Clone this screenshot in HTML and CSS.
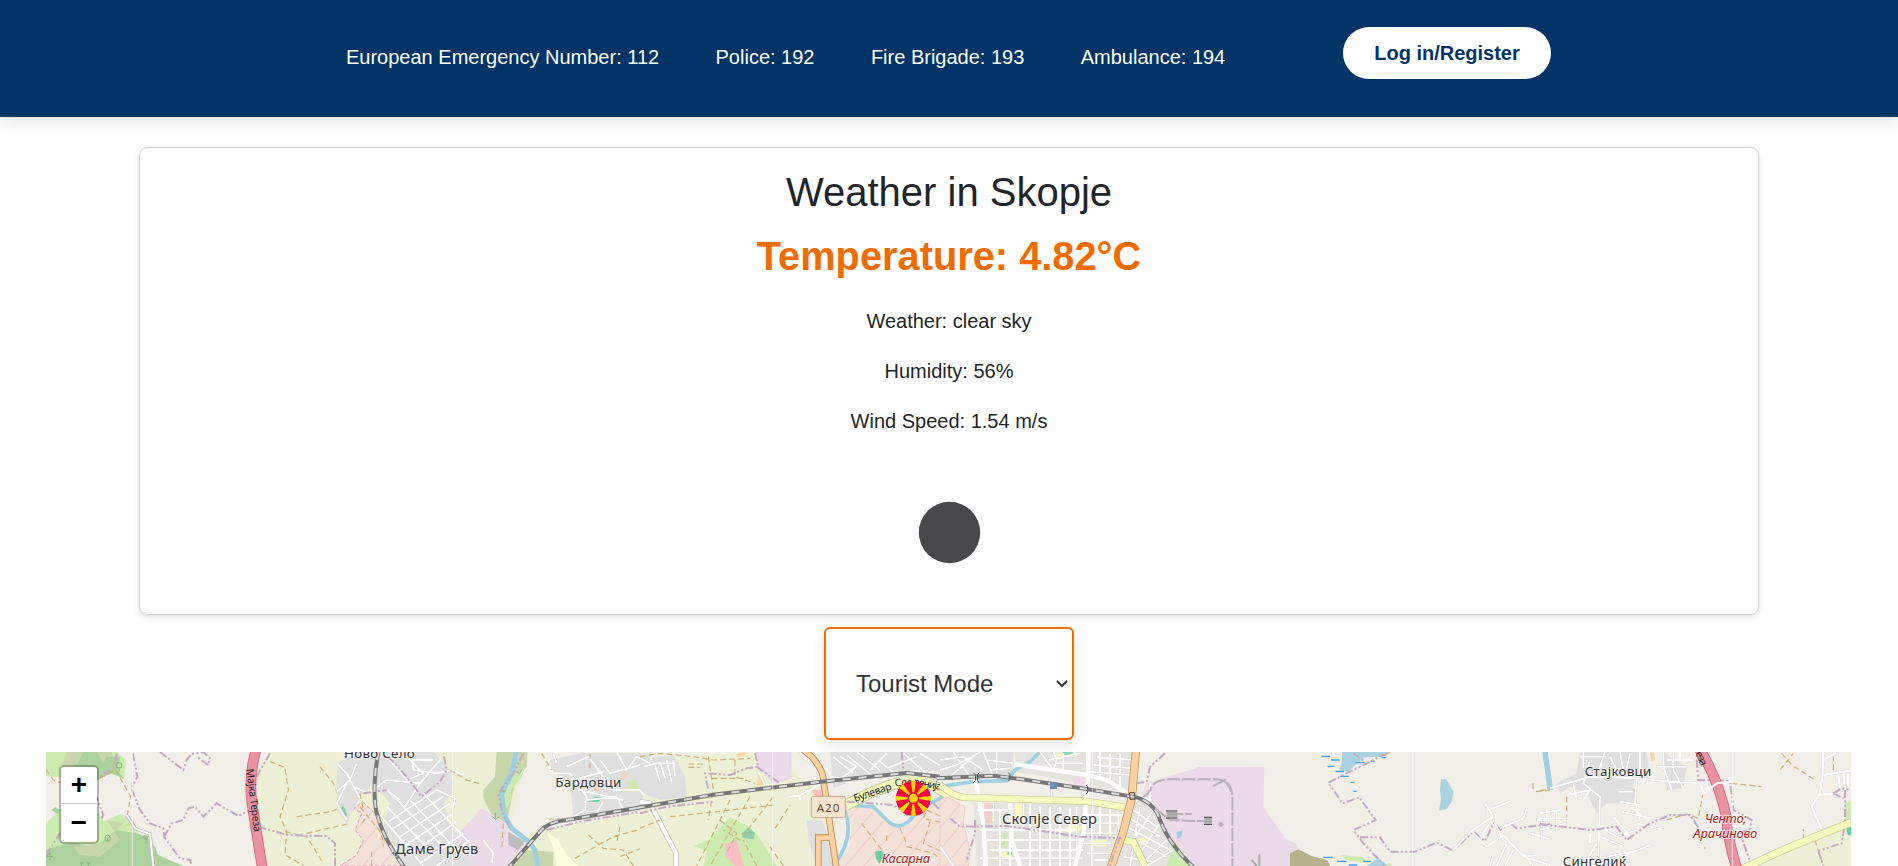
FILE: index.html
```html
<!DOCTYPE html>
<html lang="en">
<head>
<meta charset="utf-8">
<title>Skopje Guide</title>
<link rel="stylesheet" href="styles.css">
</head>
<body>
<header class="topbar">
  <ul class="numbers">
    <li>European Emergency Number: 112</li>
    <li>Police: 192</li>
    <li>Fire Brigade: 193</li>
    <li>Ambulance: 194</li>
  </ul>
  <button class="login">Log in/Register</button>
</header>
<main>
  <section class="weather">
    <h1>Weather in Skopje</h1>
    <h2>Temperature: 4.82°C</h2>
    <p>Weather: clear sky</p>
    <p>Humidity: 56%</p>
    <p>Wind Speed: 1.54 m/s</p>
    <svg class="sky" viewBox="0 0 125 125"><circle cx="62.5" cy="62.5" r="30.7"/></svg>
  </section>
  <select class="mode"><option>Tourist Mode</option></select>
  <section class="map">
    <svg class="tiles" viewBox="18 36 5415 342" preserveAspectRatio="none">
      <defs>
        <pattern id="hatch" width="42" height="42" patternUnits="userSpaceOnUse" patternTransform="rotate(40)"><rect width="42" height="42" fill="#f3e1da"/><path d="M0 0V42" stroke="#f2cbc4" stroke-width="5"/></pattern>
      </defs>
      <rect width="5500" height="400" fill="#f2efe9"/>

      <!-- western hills -->
      <g>
        <path class="meadow" d="M18 36H230L258 60 254 112 200 100 178 120H62V112L18 108ZM18 250L62 205H170L190 245 240 222 280 240 300 290 340 300V378H18Z"/>
        <path class="scrub" d="M80 36H215L225 90 180 115 150 80 65 80Z"/>
        <path class="wood" d="M130 36H170L185 60 190 70 200 50H240L232 90 254 118 215 100 170 120 62 90 110 75ZM18 330L60 315 100 310 170 318 230 270 290 280 320 290 345 320 355 345 400 365 430 378H18ZM34 210l12-8 14 8-8 12z"/>
        <path class="scrub" d="M100 320L190 310 250 250 200 240 240 300 180 350 120 345Z"/>
        <path class="field" d="M690 36H1460L1400 70 1340 130 1330 200 1370 235 1320 260 1255 285 900 378H685L655 240 650 110Z"/>
        <path class="foot" d="M18 88L40 120 65 130M180 115L225 88 250 130 272 170 262 225M690 65L735 82 745 150 720 230 740 275 735 345 790 375M735 275L800 290 850 370M770 230L870 215 900 205M840 80L880 130 900 180M800 280L930 250"/>
        <path class="bound" d="M278 40L292 110 274 145 300 210 330 250 370 265 372 290 420 355 452 360V378M360 36L430 90 440 60 455 42 490 36 510 55 505 75 470 50M372 290L395 250 430 240 445 205 465 200 490 230 530 190 595 228 640 205M650 110L690 40M655 260L740 285 860 288 885 310 885 378M230 40L225 80 180 110M165 160L190 225 182 240M18 345L60 280"/>
        <path class="case" d="M262 228L285 265 330 282 340 378"/><path class="road" d="M262 228L285 265 330 282 340 378"/>
        <path class="trunkcase" d="M648 30Q625 110 636 190Q645 250 668 390"/><path class="trunk" d="M648 30Q625 110 636 190Q645 250 668 390"/>
        <text class="street" transform="translate(619 88) rotate(83)" textLength="190">Мајка Тереза</text>
        <path class="tree" d="M203 305v-10m-8 0a8 10 0 1 1 16 0a8 9 0 1 1-16 0M318 312v-14l-8-10h16l-8 12M30 360v-25l-9 15h18M125 378v-9m-6 0h14M145 378v-9m-6 0h14M237 95v-12m-7 0h14v-14h-14z"/>
        <path d="M277 36V378" stroke="#fff" stroke-width="2"/>
      </g>

      <!-- Novo Selo, Dame Gruev, Bardovci -->
      <g transform="translate(900 0)">
        <path class="field" d="M310 36H560L540 130 520 230 400 240 340 310 300 250 250 190 330 130 290 60Z"/>
        <path class="field" d="M590 270L760 245 930 205V378H480L560 300Z"/>
        <path class="urban" d="M-10 70L60 36H280L330 90 340 150 310 190 340 270 410 330 400 378H200L130 260 150 190 100 130 60 170 20 250-10 210Z"/>
        <path class="urban" d="M630 60L720 40H930V200L740 240 700 230 690 120 640 100Z"/>
        <path fill="url(#hatch)" stroke="#d8a0b4" stroke-width="3" stroke-dasharray="12 6" d="M68 185L110 225 130 290 165 330 190 378H0L50 345 70 300 45 270 65 220 42 205Z"/>
        <path class="scrub" d="M470 36H562L560 80 525 130 500 250 460 235 430 175 430 150 465 110Z"/>
        <path class="meadow" d="M555 80L510 120 490 165 500 205 515 180 512 150 545 115Z"/>
        <path class="indus" d="M425 205L500 250 510 290 560 310 500 378H400L345 290Z"/>
        <path d="M505 275L555 305 535 330 505 315Z" fill="#bdbdbd"/>
        <path class="scrub" d="M500 378L560 330 640 335 640 378Z"/>
        <path d="M620 275L655 300 680 345 715 378H650L640 320Z" fill="#ffffe0"/>
        <path d="M740 185L765 170 790 172 775 185Z" fill="#66cda0"/>
        <path class="meadow" d="M860 125l30-8 10 30-30 3z"/><path fill="#f8d4b0" d="M840 100l15-5 8 15-15 10zM760 138l18 2 2 14-20-2zM850 140l14 4-4 12-14-2z"/>
        <path d="M0 205l10-8 12 28-6 8z" fill="#8bc99b"/>
        <path class="water" d="M530 30L515 100 485 160 490 220 515 265 560 300 585 330 592 378"/>
        <path class="minor" d="M-10 70L20 100 40 140 85 160 140 120 240 130 300 60M-10 155L30 120 50 70M150 60L200 120 250 100 200 50M215 36L220 90 290 100 340 90 375 108M240 130L195 200 140 150M220 60L280 60M40 140L60 175M20 240L-10 190 20 130M605 40L640 100 690 100 740 170 735 210 700 230M680 80L745 50 820 150 900 150 930 190M700 120L790 95M720 150L850 180M780 60L810 100 900 75M830 36L860 90 890 50 930 70M740 180L830 170 850 210M770 220L790 185M650 70L640 40"/>
        <path class="minor" d="M145 245L290 150 345 175 340 200M160 265L310 170M180 290L330 190M190 320L340 220M210 345L350 245M240 370L370 280M290 378L390 300M140 200L270 330M180 190L310 320M210 180L350 330M250 160L380 300M120 225L250 378M430 300L460 340 455 370M140 150L180 180"/>
        <path class="foot" d="M60 200L125 280 130 320M95 378V335M60 160L70 210M65 250L80 230M330 90L380 120 430 135M490 250L485 330M605 40L635 90M705 355L820 290 930 260M745 285L790 325 850 330 880 378M930 315L840 350M840 260L830 310M750 85V36M625 237H690"/>
        <path class="bound" d="M145 50L200 110 245 170 300 125 320 90 310 40M550 40L520 100 475 160 485 210 510 265M620 270L720 245 930 210M70 160L140 150"/>
        <path class="rail" d="M115 36Q95 150 110 220Q135 310 200 390M500 390L600 275Q625 245 680 240L930 197"/>
        <path class="raildash" d="M115 36Q95 150 110 220Q135 310 200 390M500 390L600 275Q625 245 680 240L930 197"/>
        <path class="reed" d="M530 95l8 6 8-12M458 230l8 8 12-8M466 218v18M482 150l8 4 8-2"/>
        <path d="M338 36V378" stroke="#fff" stroke-width="2"/>
        <text class="place" x="12" y="53" textLength="212">Ново Село</text>
        <text class="place large" x="165" y="341" textLength="250">Даме Груев</text>
        <text class="place" x="646" y="142" textLength="198">Бардовци</text>
      </g>

      <!-- Skopje north-west -->
      <g transform="translate(1800 0)">
        <path class="field" d="M20 130L100 50 310 40 400 36 480 110 540 130 560 210 550 378H0V210Z"/>
        <path class="urban" d="M0 130L40 50 100 45 135 110 140 170 60 180 20 165ZM500 240L545 240 600 378H530L505 300ZM570 36H960V100L820 90 640 120 580 145Z"/>
        <path class="indus" d="M345 36H455V115L400 135 360 85Z"/>
        <path class="meadow" d="M270 232L330 260 370 310 410 378H190L200 335 162 318 205 300Z"/>
        <path d="M258 312L290 300 300 335 312 378H285L255 345ZM515 150l45 0 10 30-35 5z" fill="#f9bfc4"/>
        <path d="M305 280l20-17 20 15-5 20-30-4z" fill="#8bd0a8"/><path fill="#fcd9a4" d="M290 40l25-4v10l-22 4zM355 95l20 40-25 5z"/>
        <path d="M610 195H700L740 240 780 265 840 210 930 150V378H580L625 330 635 260Z" fill="url(#hatch)"/>
        <path d="M615 190L750 190 815 240 775 262 730 235 700 205Z" fill="#f2efe9"/>
        <path class="water thin" d="M610 200Q650 290 580 378M615 195L700 200 740 240Q775 275 810 240L840 205 930 160"/>
        <path fill="none" stroke="#c9c795" stroke-width="34" d="M618 195L700 155 800 118 860 125 930 165"/><path fill="none" stroke="#f6fabe" stroke-width="29" d="M618 195L700 155 800 118 860 125 930 165"/>
        <path class="minor" d="M45 75L60 125M60 65L75 115M80 60L95 125M100 60L105 110M10 80L50 70 105 70M585 130L650 80 600 50M640 100L580 50M620 45L700 110M650 36L720 90M690 90L740 40M720 65L790 120M740 85L830 50M790 40L870 110M840 40L930 95M570 110L640 120M470 170L560 125M355 95L375 135M450 170L480 165 480 180M480 36L500 60"/>
        <path class="case heavy" d="M0 185L30 190 108 340V378"/><path class="road heavy" d="M0 185L30 190 108 340V378"/>
        <path class="foot" d="M0 50L60 40 160 50 220 60 330 55M205 50L220 150 205 240M285 60V110L345 130M215 115L310 115M145 72h45M145 82h35M90 230L230 215 400 195M270 180L170 378M330 170L210 378M400 170L300 300 250 270M240 240L290 280 260 340M0 265L60 240M405 265L450 195M430 378L390 320M350 378L310 300M665 250L725 330M800 320L880 340 930 378M780 265L800 310M740 285v20M860 210L915 235 905 248 850 235ZM870 245L850 310 930 345"/>
        <path class="bound" d="M345 40L355 80 320 85 270 105 195 100 205 150M350 80L420 130M0 220L80 200 220 185M785 36L790 90M620 185L760 195 810 230M880 190L930 240"/>
        <path class="primarycase" d="M490 30L515 50Q550 90 550 120L590 390M580 293H535V390"/><path class="primary" d="M490 30L515 50Q550 90 550 120L590 390M580 293H535V390"/>
        <path class="rail" d="M-10 204L220 164 545 125 800 99 940 115"/><path class="raildash" d="M-10 204L220 164 545 125 800 99 940 115"/>
        <path d="M398 36V378" stroke="#fff" stroke-width="2"/>
        <rect x="514" y="169" width="102" height="64" rx="6" fill="#f9e4d0" stroke="#c3a58c" stroke-width="3"/>
        <text class="shield" x="530" y="215" textLength="68">A20</text>
        <text class="street" transform="translate(645 186) rotate(-19)" textLength="118">Булевар</text>
        <text class="street" transform="translate(764 139) rotate(-2)" textLength="55">Сло</text>
        <text class="street" transform="translate(820 135) rotate(10)" textLength="85">венија</text>
        <path d="M705 335l20-4 8 15-15 25-10-15z" fill="#68cba1"/>
        <text class="special" x="725" y="368" textLength="145">Касарна</text>
      </g>

      <!-- Skopje Sever -->
      <g transform="translate(2700 0)">
        <path class="urban" d="M0 36H220L215 105 0 115Z"/>
        <path fill="#e5e3df" d="M225 36H590L570 160 400 125 230 95ZM100 190H550L500 378H110ZM560 180L620 185 700 320 680 378H530Z"/>
        <path fill="url(#hatch)" stroke="#ecc6be" stroke-width="2" d="M0 180L20 170 75 200 70 250 90 330 85 378H0Z"/>
        <path class="indus" d="M620 130L780 80H930V378H760L680 280 640 190 605 165ZM400 110h40v30h-40z"/>
        <path class="meadow" d="M700 300L760 378H680ZM188 280h15v40h-20z"/>
        <path d="M225 190h25v45h-25zM375 262l30-8 20 8-10 14h-38zM455 300h45v18h-45zM590 298l25-8 5 15-20 12zM180 335h35v18h-35zM350 38h60v12h-60z" fill="#fafabe"/>
        <path d="M368 36h30v12h-26zM202 335h14v10h-14z" fill="#83d8ad"/><path fill="#f3cfc7" d="M132 190h28v60h-28z"/>
        <path class="water thin" d="M0 140L100 125 200 122 225 90 270 65 300 36"/>
        <path class="minor" d="M0 60L70 50 130 90M40 36L90 110M0 90L50 75 120 36M30 110L100 50M130 36L160 110M140 60L220 70M150 90L210 85M170 36V100M300 36L340 90 350 60 340 36M350 70H430M325 60L420 40M370 90V40M470 50L580 60M460 75L575 85M450 95L570 105M480 36V115M510 40V130M540 40V140"/>
        <path class="minor" d="M110 210H210V378M130 190V378M160 190V245M180 205V378M250 190V260M270 190V378M300 200V378M330 200V378M360 200V378M390 205V378M410 200V378M120 270H410M140 300H430M150 330H430M120 355H430M260 170V190M335 150V180M430 225H550M455 210V378M480 200V290M510 205V290M535 215V290M440 250H540M430 280H530M430 310H515M440 340H510M460 360H505M560 230L660 290M580 210L650 260M560 260L690 330M570 290L680 350M600 200L570 378M640 210L580 300M660 250L600 340M600 378L680 300M620 378L700 330M550 350L640 365M0 320L40 378M630 130V185"/>
        <path class="road avenue" d="M445 36V110L430 280 405 378M222 72L440 105 500 120 570 165 630 185M105 110L130 250 138 378M210 190L215 300 240 378"/>
        <path d="M0 135Q40 168 70 172L250 178 440 184 555 202M550 300L580 305 615 378" fill="none" stroke="#c9c795" stroke-width="22"/><path d="M0 135Q40 168 70 172L250 178 440 184 555 202M550 300L580 305 615 378" fill="none" stroke="#f6fabe" stroke-width="18"/>
        <path class="primarycase wide" d="M588 30L575 175 550 275 510 390"/><path class="primary wide" d="M588 30L575 175 550 275 510 390"/>
        <path class="bound" d="M30 235L60 260 200 258 320 275 420 290 545 295M105 240V280L80 360M675 40L630 80 620 125 590 130M540 290L510 378"/>
        <path class="rail" d="M-10 115L160 107 240 117 440 147 590 172Q645 190 660 240Q690 320 770 390"/><path class="raildash" d="M-10 115L160 107 240 117 440 147 590 172Q645 190 660 240Q690 320 770 390"/>
        <path class="siding" d="M610 170Q630 160 635 140 650 118 690 118H830Q877 120 877 170V378M820 138L855 120 877 160M645 205L690 240 800 244M690 222H755"/>
        <path fill="#aaa" stroke="#333" stroke-width="3" d="M678 213h34M678 234h34M792 232h24M792 253h24"/><path d="M680 215h32v17h-32zM793 235h23v16h-23z" fill="#aaa"/><circle cx="843" cy="253" r="7" fill="#b5adb5"/>
        <path d="M710 275l18-4-4 20-12 6z" fill="#9fd0df"/>
        <rect x="330" y="127" width="21" height="20" fill="#7389b8"/>
        <path d="M458 36V378" stroke="#fff" stroke-width="2"/>
        <path fill="none" stroke="#555" stroke-width="3" d="M100 98l6 6v18l-6 6M118 98l-6 6v18l6 6M205 98l5 6v14l-5 6M438 135l5 6v16l-5 6M568 158h15l2 20h-15z"/>
        <text class="place large" x="186" y="251" textLength="285">Скопје Север</text>
      </g>

      <!-- eastern wetlands -->
      <g transform="translate(3600 0)">
        <path class="indus" d="M0 81H73L70 200 138 297 167 310 175 335 155 378H0Z"/>
        <path d="M150 340L175 328 215 348 262 360 270 378H150Z" fill="#b5b28e"/>
        <path class="lake" d="M307 36H445L430 50 375 52 340 80 325 97 297 90 305 70ZM603 118L618 118 641 155 635 185 620 207 597 212 603 180 600 150ZM380 378L415 355 445 378Z"/>
        <path class="meadow" d="M302 345L370 352 380 367 320 362ZM440 370l15 0v8h-15z"/>
        <path class="water" d="M915 36L925 100 932 150"/>
        <path d="M244 49h26M273 60h26M263 79h20M287 94h25M300 109h26M347 68h28M332 127h12M340 154h10M392 63h12M425 53h12M250 352h28M291 364h28M326 375h26M369 364h25" fill="none" stroke="#4b9eed" stroke-width="4"/>
        <path class="bound" d="M440 40L320 100 265 128 308 190 358 172 407 240 341 270 370 310 435 378M360 292H420L450 335H525L590 308 640 332 700 275 735 303 762 248 780 270 810 250 830 265 930 252M340 40L375 65"/>
        <path class="minor" d="M640 330L695 272 760 230 735 190M740 213L815 182M695 275L740 320 790 285 850 350 930 375M760 240L790 300M780 265L850 235 860 205M720 290L750 250M800 310L770 378M820 330L795 378M865 278L930 298M905 235V300M890 240H930M850 350L890 345M880 378L850 340M760 345L750 378"/>
        <path class="foot" d="M879 130V150M888 155L930 150M450 36L430 50"/>
        <path d="M58 343V378M35 360L50 378" stroke="#aaa" stroke-width="6"/>
        <path d="M517 36V378" stroke="#fff" stroke-width="2"/>
      </g>

      <!-- Stajkovci, Singelic -->
      <g transform="translate(4500 0)">
        <path class="urban" d="M120 36H320L330 110 280 130 290 190 200 190 170 220 140 160 90 140 60 160 50 130 110 100ZM370 36L440 80 430 145 380 150Z"/>
        <path class="field" d="M620 378L830 300 933 255V378Z"/><path d="M918 262l15-4v28h-10z" fill="#5fd3a0"/><path class="meadow" d="M915 185h18v55h-18z"/>
        <path class="water" d="M15 36L30 150"/>
        <path class="minor" d="M30 145L150 110 290 115 390 125 480 130M120 50H200M130 36V85M150 60L130 130 180 170 175 350M80 165L150 150 130 180M100 130L110 180M170 110L195 36M210 50L230 90M240 36L250 90M270 40L260 85M300 36V90M290 115L285 190 300 240 290 210M235 155H280M240 185L300 195M245 215L330 235M270 200L350 260M0 235H80M0 220L60 210M20 210V260M50 210V270M0 270L80 250M370 36V80L395 150M400 36V90L430 145M380 60H460M350 80H440M420 36V60M250 350L330 315M200 350L300 330M130 378L170 310M150 280V310M180 260L230 290 290 270M180 290L250 320M220 230L270 290M310 230L380 240M290 250L370 270"/>
        <path class="minor lane" d="M850 36L848 100 840 160 815 200 845 268M848 105L933 92M835 165L880 160M895 105L900 145M910 100L915 150M925 100V140M850 60L890 38"/>
        <path class="foot" d="M80 170V230M0 152L30 148M380 240L440 222 475 235 488 165M575 130L665 140M720 90L760 40M725 40L755 75 830 123M880 90V50M790 300V268M825 300L850 378M495 320v8"/>
        <path class="bound" d="M0 252L80 262 150 270 230 260 260 300 330 250 390 225 450 225 480 270M470 60L475 120 570 123 580 210 635 240 630 265 600 280 635 378M915 150V250L905 310 835 333M835 333L850 378M880 160L905 145 933 150M880 160L910 175"/>
        <path d="M600 390L740 325 933 247" fill="none" stroke="#c9c795" stroke-width="24"/><path d="M600 390L740 325 933 247" fill="none" stroke="#f6fabe" stroke-width="20"/>
        <path class="trunkcase" d="M475 22Q535 115 560 235Q565 310 592 390"/><path class="trunk" d="M475 22Q535 115 560 235Q565 310 592 390"/>
        <path d="M480 130L490 160 530 130 575 125" class="road"/>
        <text class="street" transform="translate(466 40) rotate(66)" textLength="43">еза</text>
        <path d="M577 36V378M185 68v15" stroke="#fff" stroke-width="2"/><path d="M330 38l12-2 4 24-12 5z" fill="#fbd5ac"/>
        <text class="place" x="134" y="107" textLength="200">Стајковци</text>
        <text class="place" x="68" y="379" textLength="190">Сингелиќ</text>
        <text class="special" x="494" y="248" textLength="126">Ченто;</text>
        <text class="special" x="460" y="293" textLength="192">Арачиново</text>
      </g>

      <!-- sun marker -->
      <g transform="translate(2620 175)">
        <clipPath id="disc"><circle r="53"/></clipPath>
        <g clip-path="url(#disc)"><circle r="53" fill="#f7063d"/>
        <path fill="#ffd500" d="M0 0L-8-54H8ZM0 0L-8 54H8ZM0 0L-54-8V8ZM0 0L54-8V8ZM0 0L-43-31-31-43ZM0 0L43-31 31-43ZM0 0L-43 31-31 43ZM0 0L43 31 31 43Z"/>
        <circle r="15.5" fill="#ffd500" stroke="#f7063d" stroke-width="4"/></g>
      </g>
    </svg>
    <div class="zoom"><button>+</button><button>−</button></div>
  </section>
</main>
</body>
</html>
```
FILE: styles.css
```css
* { box-sizing: border-box; }
body {
  margin: 0;
  height: 866px;
  overflow: hidden;
  background: #fefefe;
  color: #212529;
  font: 20px/30px "Liberation Sans", Arial, sans-serif;
}
.topbar {
  height: 117px;
  display: flex;
  align-items: flex-start;
  padding: 27px 0 0 346px;
  background: #036;
  box-shadow: 0 4px 15px rgba(0, 0, 0, .1);
}
.numbers {
  display: flex;
  gap: 56.4px;
  width: 997px;
  margin: 0;
  padding: 15px 0 0;
  list-style: none;
  color: #fff;
}
.numbers li { white-space: nowrap; }
.login {
  width: 208px;
  height: 52px;
  padding: 0;
  border: 0;
  border-radius: 26px;
  background: #fff;
  color: #036;
  font: bold 20px "Liberation Sans", Arial, sans-serif;
}
main {
  display: flex;
  flex-direction: column;
  align-items: center;
}
.weather {
  width: 1620px;
  height: 468px;
  margin-top: 30px;
  padding: 20px;
  border: 1px solid #ced0d2;
  border-radius: 8px;
  box-shadow: 0 2px 6px rgba(0, 0, 0, .1);
  text-align: center;
}
.weather h1, .weather h2 {
  margin: 0;
  font-size: 40px;
  line-height: 48px;
}
.weather h1 { font-weight: 400; }
.weather h2 { margin: 16px 0 26px; color: #ef6c00; font-size: 39.8px; }
.weather p { margin: 0 0 20px; }
.sky { display: block; width: 125px; height: 125px; margin: 34px auto 0; }
.sky circle { fill: #48484a; }
.mode {
  zoom: 1.25;
  width: 200px;
  height: 90.4px;
  margin: 9.6px 0;
  padding: 0 0 0 20px;
  border: 1.6px solid #ef6c00;
  border-radius: 4.8px;
  background: #fff;
  color: #333;
  font: 19.2px "Liberation Sans", Arial, sans-serif;
  box-shadow: 0 4px 10px rgba(0, 0, 0, .1);
}
.map {
  position: relative;
  align-self: flex-start;
  width: 1805px;
  height: 114px;
  margin-left: 46px;
}
.tiles { display: block; width: 1805px; height: 114px; }
.zoom {
  position: absolute;
  left: 13px;
  top: 13px;
  width: 40px;
  border: 2px solid rgba(0, 0, 0, .25);
  border-radius: 5px;
  background-clip: padding-box;
}
.zoom button {
  display: block;
  width: 36px;
  height: 37px;
  padding: 3px 0 0;
  border: 0;
  background: #fff;
  color: #000;
  font: bold 28px/34px "Liberation Mono", monospace;
}
.zoom button:first-child { border-bottom: 1px solid #ccc; border-radius: 3px 3px 0 0; }
.zoom button:last-child { height: 38px; border-radius: 0 0 3px 3px; }

/* map features */
.field { fill: #eef0d5; }
.meadow { fill: #cdebb0; }
.scrub { fill: #c8d7ab; }
.wood { fill: #add19e; }
.urban { fill: #e0dfdf; }
.indus { fill: #ebdbe8; }
.lake { fill: #aad3df; }
.water { fill: none; stroke: #9fd0df; stroke-width: 15; }
.water.thin { stroke-width: 11; }
.foot { fill: none; stroke: #cdae78; stroke-width: 3.5; stroke-dasharray: 17 10; }
.bound { fill: none; stroke: #c3a9c4; stroke-width: 6; stroke-dasharray: 24 7 6 7 6 7; }
.minor, .road { fill: none; stroke: #fff; stroke-width: 6; stroke-linejoin: round; }
.minor { filter: drop-shadow(0 0 2px #aaa); }
.minor.lane { stroke-width: 8; }
.road.avenue { stroke-width: 13; }
.case { fill: none; stroke: #bbb; stroke-width: 10; }
.case.heavy { stroke-width: 16; }
.road.heavy { stroke-width: 12; }
.trunkcase { fill: none; stroke: #dc5b7a; stroke-width: 32; }
.trunk { fill: none; stroke: #e892a2; stroke-width: 27; }
.primarycase { fill: none; stroke: #b98a4c; stroke-width: 20; }
.primary { fill: none; stroke: #fcd0a0; stroke-width: 15; }
.primarycase.wide { stroke-width: 25; }
.primary.wide { stroke-width: 21; }
.rail { fill: none; stroke: #777; stroke-width: 12; }
.raildash { fill: none; stroke: #ddd; stroke-width: 6; stroke-dasharray: 24 24; }
.siding { fill: none; stroke: #b9b2b9; stroke-width: 6; stroke-dasharray: 40 6; }
.tree { fill: none; stroke: #85b578; stroke-width: 3; }
.reed { fill: none; stroke: #8fad78; stroke-width: 3; }
.place, .special, .street, .shield {
  font-family: "Noto Sans", sans-serif;
  paint-order: stroke;
  stroke-linejoin: round;
}
.place { font-size: 40px; fill: #333; stroke: rgba(255, 255, 255, .6); stroke-width: 6px; }
.place.large { font-size: 44px; }
.special { font-size: 39px; font-style: italic; fill: #b01c24; stroke: rgba(255, 255, 255, .6); stroke-width: 6px; }
.street { font-size: 31px; fill: #222; stroke: none; }
.shield { font-size: 35px; fill: #6a4b30; stroke: none; }
```
